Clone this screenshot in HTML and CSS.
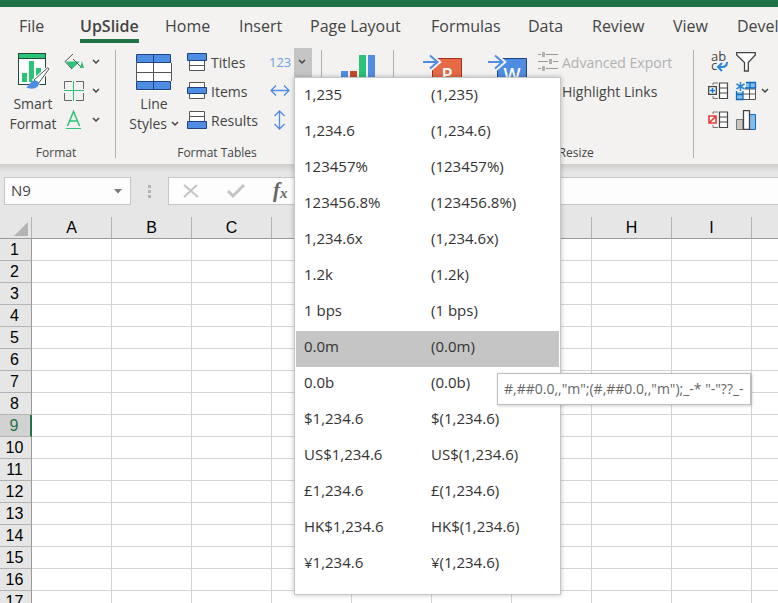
FILE: index.html
```
<!DOCTYPE html>
<html lang="en">
<head>
    <meta charset="UTF-8">
    <title>Number formats</title>
    <link rel="stylesheet" href="styles.css">
</head>
<body>
    <div class="title-bar"></div>

    <nav class="tabs">
        <a href="#">File</a>
        <a href="#" class="active">UpSlide</a>
        <a href="#">Home</a>
        <a href="#">Insert</a>
        <a href="#">Page Layout</a>
        <a href="#">Formulas</a>
        <a href="#">Data</a>
        <a href="#">Review</a>
        <a href="#">View</a>
        <a href="#">Developer</a>
    </nav>

    <!-- shared chevron -->
    <svg class="defs" width="0" height="0">
        <symbol id="chevron" viewBox="0 0 8 6"><path d="M1 1l3 3 3-3" fill="none" stroke="#444" stroke-width="1.5"/></symbol>
    </svg>

    <div class="ribbon">
        <section class="group group-format">
            <div class="group-body">
                <button class="big-btn">
                    <svg width="36" height="38" viewBox="0 0 36 38">
                        <rect x="3.5" y="1.5" width="27" height="31" fill="#fff" stroke="#234b3b"/>
                        <path d="M4 2h26v4H4z" fill="#2bc377"/>
                        <path d="M3 6.5h28" stroke="#234b3b"/>
                        <path d="M7 21h5v9H7zM14 9h5v21h-5zM21 16h5v14h-5z" fill="#2bc377"/>
                        <path d="M33 15.5L19 28l4 4 11-15z" fill="#fff" stroke="#fff" stroke-width="3"/>
                        <path d="M33 15.5L19 28l4 4 11-15z" fill="#fff" stroke="#555"/>
                        <path d="M11 35c4-.5 4-7 9-6.500 5 .5 5 4 2 6.500-3 2.500-8 2-11 0z" fill="#4f8de3"/>
                    </svg>
                    <span>Smart<br>Format</span>
                </button>
                <div class="rows">
                    <button class="row icon-row" aria-label="Fill colour">
                        <svg width="20" height="20" viewBox="0 0 20 20">
                            <path d="M2 9.500h14L8 17z" fill="#2bc377"/>
                            <path d="M9 2L1 9.500 8 17M9 7l8 8" fill="none" stroke="#555"/>
                            <path d="M18 9l2 7h-4z" fill="#2bc377"/>
                        </svg>
                        <svg class="chev"><use href="#chevron"/></svg>
                    </button>
                    <button class="row icon-row" aria-label="Borders">
                        <svg width="20" height="20" viewBox="0 0 20 20" fill="none">
                            <path d="M.5 8V.5H8M12 .5h7.500V8M19.500 12v7.500H12M8 19.500H.5V12" stroke="#666"/>
                            <path d="M9.500 0v20M0 9.500h20" stroke="#2bc377"/>
                        </svg>
                        <svg class="chev"><use href="#chevron"/></svg>
                    </button>
                    <button class="row icon-row" aria-label="Font colour">
                        <svg width="20" height="20" viewBox="0 0 20 20" fill="none" stroke="#2bc377">
                            <path d="M3.500 16L9.500 1.500 15.500 16M5.500 11h8" stroke-width="1.500"/>
                            <path d="M2 18.500h15"/>
                        </svg>
                        <svg class="chev"><use href="#chevron"/></svg>
                    </button>
                </div>
            </div>
            <div class="group-label">Format</div>
        </section>

        <section class="group group-tables">
            <div class="group-body">
                <button class="big-btn">
                    <svg width="36" height="38" viewBox="0 0 36 38">
                        <rect x="1" y="2" width="34" height="35" fill="#fff"/>
                        <path d="M1 1h34v8H1zM1 28h34v8H1z" fill="#4f8de3"/>
                        <path d="M.5 9v18M35.500 9v18M17.500 9v18M1 18.500h34" fill="none" stroke="#555"/>
                        <path d="M.5.500h34v8H.5zM.5 27.500h34v8H.5zM17.500 1v8M17.500 28v8" fill="none" stroke="#1f4485"/>
                    </svg>
                    <span>Line<br>Styles <svg class="chev"><use href="#chevron"/></svg></span>
                </button>
                <div class="rows">
                    <button class="row">
                        <svg width="20" height="18" viewBox="0 0 20 18">
                            <path d="M2.500 7.500h15v10h-15zM2 12.500h16" fill="#fff" stroke="#555"/>
                            <path d="M.5.500h19v7H.5z" fill="#4f8de3" stroke="#1f4485"/>
                        </svg>
                        Titles
                    </button>
                    <button class="row">
                        <svg width="20" height="18" viewBox="0 0 20 18">
                            <path d="M2.500.500h15v16h-15z" fill="#fff" stroke="#555"/>
                            <path d="M.5 5.500h19v6H.5z" fill="#4f8de3" stroke="#1f4485"/>
                        </svg>
                        Items
                    </button>
                    <button class="row">
                        <svg width="20" height="18" viewBox="0 0 20 18">
                            <path d="M2.500.500h15v10h-15zM2 5.500h16" fill="#fff" stroke="#555"/>
                            <path d="M.5 10.500h19v7H.5z" fill="#4f8de3" stroke="#1f4485"/>
                        </svg>
                        Results
                    </button>
                </div>
                <div class="rows number-rows">
                    <div class="split">
                        <button class="row number-btn">123</button>
                        <button class="drop-btn" aria-label="Number formats"><svg class="chev"><use href="#chevron"/></svg></button>
                        <div class="menu">
                            <button class="menu-item"><span>1,235</span><span>(1,235)</span></button>
                            <button class="menu-item"><span>1,234.6</span><span>(1,234.6)</span></button>
                            <button class="menu-item"><span>123457%</span><span>(123457%)</span></button>
                            <button class="menu-item"><span>123456.8%</span><span>(123456.8%)</span></button>
                            <button class="menu-item"><span>1,234.6x</span><span>(1,234.6x)</span></button>
                            <button class="menu-item"><span>1.2k</span><span>(1.2k)</span></button>
                            <button class="menu-item"><span>1 bps</span><span>(1 bps)</span></button>
                            <button class="menu-item selected"><span>0.0m</span><span>(0.0m)</span></button>
                            <button class="menu-item"><span>0.0b</span><span>(0.0b)</span></button>
                            <button class="menu-item"><span>$1,234.6</span><span>$(1,234.6)</span></button>
                            <button class="menu-item"><span>US$1,234.6</span><span>US$(1,234.6)</span></button>
                            <button class="menu-item"><span>£1,234.6</span><span>£(1,234.6)</span></button>
                            <button class="menu-item"><span>HK$1,234.6</span><span>HK$(1,234.6)</span></button>
                            <button class="menu-item"><span>¥1,234.6</span><span>¥(1,234.6)</span></button>
                            <div class="tooltip" role="tooltip">#,##0.0,,"m";(#,##0.0,,"m");_-* "-"??_-</div>
                        </div>
                    </div>
                    <button class="row" aria-label="Column width">
                        <svg width="22" height="20" viewBox="0 0 22 20" fill="none" stroke="#4f8de3" stroke-width="1.300"><path d="M2 9.500h18M7 4.500l-5 5 5 5M15 4.500l5 5-5 5"/></svg>
                    </button>
                    <button class="row" aria-label="Row height">
                        <svg width="22" height="20" viewBox="0 0 22 20" fill="none" stroke="#4f8de3" stroke-width="1.300"><path d="M10.500 1v18M5.500 6l5-5 5 5M5.500 14l5 5 5-5"/></svg>
                    </button>
                </div>
            </div>
            <div class="group-label">Format Tables</div>
        </section>

        <section class="group group-charts">
            <div class="group-body">
                <button class="big-btn" aria-label="Charts">
                    <svg width="36" height="38" viewBox="0 0 36 38">
                        <path d="M1 19h7v18H1zM28 3h7v34h-7z" fill="#4f8de3"/>
                        <path d="M10 19h7v18h-7z" fill="#c8492b"/>
                        <path d="M19 3h7v34h-7z" fill="#2bc377"/>
                    </svg>
                </button>
            </div>
        </section>

        <section class="group group-export">
            <div class="group-body">
                <button class="big-btn" aria-label="Export to PowerPoint">
                    <svg width="40" height="38" viewBox="0 0 40 38">
                        <path d="M9.500 6.500h29v29h-29z" fill="#e56a45" stroke="#a8331b"/>
                        <text x="24" y="29" class="app-letter">P</text>
                        <path d="M0 10h14M7 3l8 7-8 7" fill="none" stroke="#f3f2f1" stroke-width="5"/>
                        <path d="M0 10h15M7 3.500l7.500 6.500L7 16.500" fill="none" stroke="#4f8de3" stroke-width="2"/>
                    </svg>
                </button>
                <button class="big-btn" aria-label="Export to Word">
                    <svg width="40" height="38" viewBox="0 0 40 38">
                        <path d="M9.500 6.500h29v29h-29z" fill="#4f8de3" stroke="#1f4485"/>
                        <text x="24" y="29" class="app-letter">W</text>
                        <path d="M0 10h14M7 3l8 7-8 7" fill="none" stroke="#f3f2f1" stroke-width="5"/>
                        <path d="M0 10h15M7 3.500l7.500 6.500L7 16.500" fill="none" stroke="#4f8de3" stroke-width="2"/>
                    </svg>
                </button>
                <div class="rows">
                    <button class="row" disabled>
                        <svg width="20" height="20" viewBox="0 0 20 20">
                            <path d="M0 2.500h20M0 9.500h20M0 16.500h20" stroke="#999"/>
                            <path d="M3 0h5v6H3zM10 6h5v7h-5zM3 13h5v7H3z" fill="#f3f2f1"/>
                            <path d="M4 0h3v5H4zM11 7h3v5h-3zM4 14h3v5H4z" fill="#b1b1b1"/>
                        </svg>
                        Advanced Export
                    </button>
                    <button class="row">
                        <svg width="20" height="20" viewBox="0 0 20 20"><path d="M3 14l9-9 3 3-9 9H3z" fill="none" stroke="#555"/></svg>
                        Highlight Links
                    </button>
                </div>
            </div>
            <div class="group-label">Export and Resize</div>
        </section>

        <section class="group group-tools">
            <div class="tool-grid">
                <button aria-label="Wrap text">
                    <svg width="20" height="20" viewBox="0 0 20 20">
                        <text x="3" y="9" class="wrap-letters">ab</text>
                        <text x="3" y="18" class="wrap-letters">c</text>
                        <path d="M19 10c0 4-2 5-5 5h-3M14 11l-4 4 4 4" fill="none" stroke="#2b88d8" stroke-width="2"/>
                    </svg>
                </button>
                <button aria-label="Filter">
                    <svg width="20" height="20" viewBox="0 0 20 20"><path d="M.700 .700h18.600V3l-7 7.500V19H8.500v-8.500L.700 3z" fill="#fff" stroke="#444" stroke-width="1.300"/></svg>
                </button>
                <span></span>
                <button aria-label="Insert cells">
                    <svg width="20" height="18" viewBox="0 0 20 18" fill="none">
                        <path d="M11.500 1h8v15.500h-8zM11 6h8M11 11h8" fill="#fff" stroke="#444" stroke-width="1.200"/>
                        <path d="M5 3V1h5M5 14v2.500h5" stroke="#777"/>
                        <path d="M.7 4.700h7.600v7.600H.7z" fill="#fff" stroke="#444" stroke-width="1.300"/>
                        <path d="M4.500 6v5M2 8.500h5" stroke="#0f78d4" stroke-width="1.600"/>
                    </svg>
                </button>
                <button aria-label="Format cells">
                    <svg width="20" height="18" viewBox="0 0 20 18" fill="none">
                        <path d="M1 1h18.500v16.500H1z" fill="#fff"/>
                        <path d="M10 1h9v5h-9zM1 10h6v7H1z" fill="#83beec"/>
                        <path d="M7 7h12.500v10.500H7M7 12h12M13.500 7v10" stroke="#555"/>
                        <path d="M10 .5h9.500V6H7v11.500H.5V9M14 1v5M1 12.500h6" stroke="#0f6cbd" stroke-width="1.300"/>
                        <path d="M0 0h9v9H0z" fill="#f3f2f1"/>
                        <path d="M4.500 0v9M.5 2l8 5M8.500 2l-8 5" stroke="#2b88d8" stroke-width="1.500"/>
                    </svg>
                </button>
                <button aria-label="More formats"><svg class="chev"><use href="#chevron"/></svg></button>
                <button aria-label="Delete cells">
                    <svg width="20" height="18" viewBox="0 0 20 18" fill="none">
                        <path d="M11.500 1h8v15.500h-8zM11 6h8M11 11h8" fill="#fff" stroke="#444" stroke-width="1.200"/>
                        <path d="M5 3V1h5M5 14v2.500h5" stroke="#777"/>
                        <path d="M1 5h7v7H1zM1.500 11.500l6-6" fill="#fff" stroke="#e8393c" stroke-width="1.600"/>
                    </svg>
                </button>
                <button aria-label="Chart">
                    <svg width="20" height="20" viewBox="0 0 20 20">
                        <path d="M.5 9.500H7v10H.5z" fill="#c8c6c4" stroke="#777"/>
                        <path d="M13 4.500h6.500v15H13z" fill="#83beec" stroke="#0f6cbd"/>
                        <path d="M7.500.700h6v18.600h-6z" fill="#fff" stroke="#444" stroke-width="1.300"/>
                    </svg>
                </button>
            </div>
        </section>
    </div>

    <div class="formula-bar">
        <div class="name-box">
            <input type="text" value="N9" aria-label="Name box">
            <svg width="8" height="5" viewBox="0 0 8 5"><path d="M0 0h8L4 4.500z" fill="#777"/></svg>
        </div>
        <div class="grip"><i></i><i></i><i></i></div>
        <div class="formula">
            <button aria-label="Cancel"><svg width="16" height="14" viewBox="0 0 16 14"><path d="M1 1l14 12M14 1L1 13" stroke="#c4c4c4" stroke-width="2"/></svg></button>
            <button aria-label="Enter"><svg width="18" height="14" viewBox="0 0 18 14"><path d="M1 7l5 5L17 1" fill="none" stroke="#c4c4c4" stroke-width="3"/></svg></button>
            <button class="fx" aria-label="Insert function">f<sub>x</sub></button>
            <input type="text" aria-label="Formula">
        </div>
    </div>

    <div class="sheet-wrap">
        <table class="sheet">
            <thead>
                <tr>
                    <th class="corner"><svg width="14" height="14" viewBox="0 0 14 14"><path d="M14 0v14H0z" fill="#b3b3b3"/></svg></th>
                    <th>A</th><th>B</th><th>C</th><th>D</th><th>E</th><th>F</th><th>G</th><th>H</th><th>I</th><th></th>
                </tr>
            </thead>
            <tbody id="rows"></tbody>
        </table>
    </div>

    <script>
        const rows = document.getElementById('rows');
        for (let r = 1; r <= 17; r++) {
            const tr = rows.insertRow();
            const th = document.createElement('th');
            th.textContent = r;
            if (r === 9) th.className = 'current';
            tr.appendChild(th);
            for (let c = 0; c < 10; c++) tr.insertCell();
        }
    </script>
</body>
</html>
```
FILE: styles.css
```
* {
    box-sizing: border-box;
}
body {
    margin: 0;
    height: 100vh;
    overflow: hidden;
    background-color: #e6e6e6;
    color: #444;
    font-family: "Open Sans", "Noto Sans", sans-serif;
    font-size: 14px;
}
button {
    padding: 0;
    border: none;
    background: none;
    color: inherit;
    font: inherit;
    text-align: left;
    cursor: pointer;
}
svg {
    display: block;
    flex: none;
    overflow: visible;
}
.defs {
    position: absolute;
}
.title-bar {
    height: 7px;
    background-color: #217346;
}

/* tabs */
.tabs {
    display: grid;
    grid-template-columns: 61px 85px 74px 71px 121px 97px 64px 81px 64px 1fr;
    height: 41px;
    padding-left: 19px;
    overflow: hidden;
    background-color: #f3f2f1;
    font-size: 16px;
    line-height: 38px;
}
.tabs a {
    justify-self: start;
    height: 36px;
    color: #444;
    text-decoration: none;
    white-space: nowrap;
}
.tabs a:last-child {
    width: 0;
}
.tabs .active {
    border-bottom: 4px solid #217346;
    font-weight: 600;
}

/* ribbon */
.ribbon {
    display: flex;
    height: 116px;
    background-color: #f3f2f1;
}
.group {
    position: relative;
    flex: none;
    display: flex;
    flex-direction: column;
}
.group::after {
    content: "";
    position: absolute;
    top: 2px;
    right: 0;
    bottom: 6px;
    width: 1px;
    background-color: #b1b1b1;
}
.group-tools::after {
    display: none;
}
.group-body {
    display: flex;
    height: 96px;
}
.group-label {
    padding-right: 4px;
    line-height: 22px;
    font-size: 12px;
    text-align: center;
}
.group-format {
    width: 116px;
}
.group-tables {
    width: 206px;
}
.group-charts {
    width: 72px;
}
.group-export {
    width: 300px;
}
.group-tools {
    flex: 1;
    padding-left: 14px;
}
.big-btn {
    display: flex;
    flex-direction: column;
    align-items: center;
    padding-top: 4px;
    line-height: 20px;
    text-align: center;
}
.big-btn > span {
    margin-top: 4px;
    white-space: nowrap;
}
.group-format .big-btn {
    width: 64px;
    padding-left: 2px;
}
.group-tables .big-btn {
    width: 74px;
    padding: 6px 0 0 2px;
}
.group-tables .big-btn > span {
    margin-top: 2px;
}
.group-charts .big-btn {
    width: 72px;
}
.group-export .group-body {
    padding-left: 29px;
}
.group-export .big-btn {
    width: 65px;
    align-items: flex-start;
}
.group-export .rows {
    margin-left: -15px;
}
.group-export .group-label {
    padding-right: 0;
}
.rows {
    display: flex;
    flex-direction: column;
}
.row {
    display: flex;
    align-items: center;
    gap: 4px;
    height: 29px;
    padding-bottom: 1px;
    white-space: nowrap;
}
.row:disabled {
    color: #b1b1b1;
}
.icon-row {
    gap: 8px;
}
.chev {
    width: 8px;
    height: 6px;
}
.big-btn .chev {
    display: inline-block;
    vertical-align: 2px;
}
.group-tables .rows {
    width: 80px;
    margin-left: -3px;
}
.group-tables .number-rows {
    width: 46px;
    margin-left: 2px;
}
.split {
    position: relative;
    display: flex;
}
.number-btn {
    width: 25px;
    color: #6f9fe3;
    font-size: 13px;
}
.drop-btn {
    display: flex;
    align-items: center;
    justify-content: center;
    width: 18px;
    height: 29px;
    padding: 0 3px 1px 0;
    background-color: #c5c5c5;
}
.app-letter {
    fill: #fff;
    font-size: 18px;
    font-weight: 600;
    text-anchor: middle;
}
.wrap-letters {
    fill: #444;
    font-size: 13px;
}
.tool-grid {
    display: grid;
    grid-template-columns: 28px 24px 16px;
    grid-auto-rows: 29px;
    align-items: center;
}
.tool-grid svg {
    margin-bottom: 1px;
}
.tool-grid .chev {
    margin-left: 1px;
}

/* number format menu */
.menu {
    position: absolute;
    top: 29px;
    left: 25px;
    z-index: 10;
    width: 267px;
    padding: 1px 1px 11px;
    border: 1px solid #c6c6c6;
    background-color: #fff;
    box-shadow: 0 0 5px rgba(0, 0, 0, 0.25);
    font-size: 15px;
}
.menu-item {
    display: grid;
    grid-template-columns: 127px 1fr;
    align-items: center;
    width: 100%;
    height: 36px;
    padding: 0 8px 6px;
    color: #333;
}
.menu-item.selected {
    background-color: #c5c5c5;
}
.tooltip {
    position: absolute;
    top: 295px;
    left: 202px;
    padding: 0 6px;
    border: 1px solid #bebebe;
    background-color: #fff;
    box-shadow: 1px 1px 3px rgba(0, 0, 0, 0.2);
    color: #666;
    font-size: 14px;
    line-height: 30px;
    white-space: nowrap;
}

/* formula bar */
.formula-bar {
    display: flex;
    height: 53px;
    padding: 13px 0 12px 4px;
    background: linear-gradient(#cecdcc, #e6e6e6 8px);
}
.name-box {
    display: flex;
    align-items: center;
    width: 127px;
    padding: 0 8px 0 6px;
    border: 1px solid #c6c6c6;
    background-color: #fdfdfd;
}
.name-box input,
.formula input {
    flex: 1;
    min-width: 0;
    padding: 0 0 2px;
    border: none;
    background: none;
    color: #444;
    font-family: inherit;
    font-size: 15px;
}
.grip {
    display: flex;
    flex-direction: column;
    align-items: center;
    justify-content: center;
    gap: 2px;
    width: 37px;
}
.grip i {
    width: 3px;
    height: 3px;
    background-color: #b3b3b3;
}
.formula {
    flex: 1;
    display: flex;
    align-items: center;
    gap: 28px;
    padding-left: 14px;
    border: 1px solid #c6c6c6;
    border-right: none;
    background-color: #fdfdfd;
}
.fx {
    color: #666;
    font-family: "Liberation Serif", serif;
    font-size: 21px;
    font-style: italic;
    font-weight: bold;
    line-height: 20px;
}
.fx sub {
    font-size: 15px;
    vertical-align: -1px;
}

/* sheet */
.sheet-wrap {
    overflow: hidden;
}
.sheet {
    width: 832px;
    table-layout: fixed;
    border-collapse: separate;
    border-spacing: 0;
    background-color: #fff;
    font-family: "Liberation Sans", Arial, sans-serif;
    font-size: 16px;
}
.sheet th,
.sheet td {
    height: 22px;
    padding: 1px 0 0;
    border-right: 1px solid #d4d4d4;
    border-bottom: 1px solid #d4d4d4;
    color: #000;
    font-weight: normal;
    line-height: 20px;
}
.sheet th {
    background-color: #e6e6e6;
}
.sheet thead th {
    border-right: 1px solid #b3b3b3;
    border-bottom-color: #999;
}
.sheet tbody th {
    border-right-color: #999;
    border-bottom-color: #b3b3b3;
    padding-right: 2px;
}
.sheet .corner {
    width: 32px;
}
.corner svg {
    margin: 2px 3px 0 auto;
}
.sheet tbody .current {
    border-right: 2px solid #217346;
    background-color: #d2d2d2;
    color: #217346;
}
```
